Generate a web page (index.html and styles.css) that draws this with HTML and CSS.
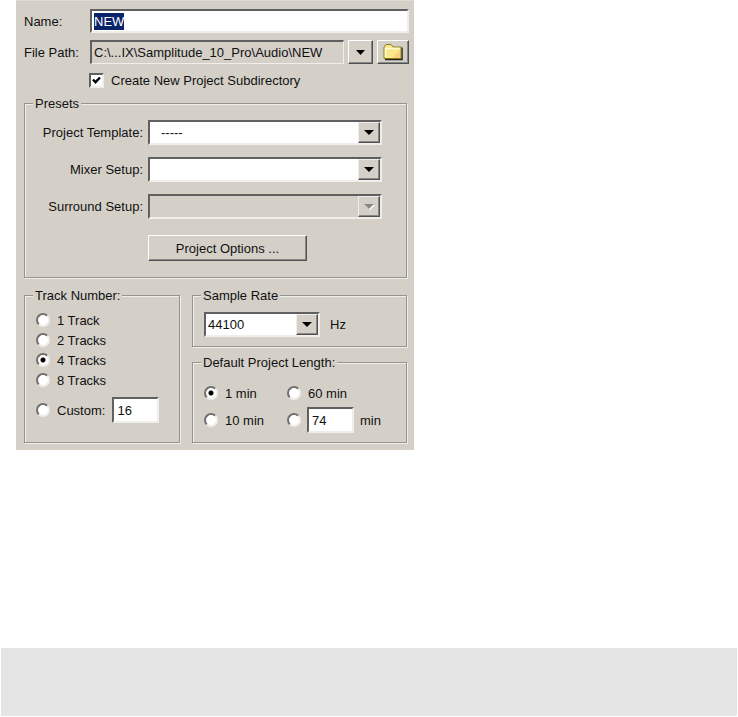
FILE: index.html
```html
<!DOCTYPE html>
<html lang="en">
<head>
    <meta charset="UTF-8">
    <meta name="viewport" content="width=device-width, initial-scale=1.0">
    <title>New Project</title>
    <link rel="stylesheet" href="styles.css">
</head>
<body>

<form class="dialog">
    <div class="row">
        <label class="row-label" for="name">Name:</label>
        <div class="name-box">
            <input type="text" id="name" class="name-input" value="NEW">
        </div>
    </div>
    <div class="row">
        <label class="row-label" for="path">File Path:</label>
        <input type="text" id="path" class="field path" value="C:\...IX\Samplitude_10_Pro\Audio\NEW" readonly>
        <button type="button" class="btn btn-arrow" aria-label="Recent paths">
            <svg width="9" height="5" viewBox="0 0 9 5"><path d="M0 0h9L4.500 5z" fill="#000"/></svg>
        </button>
        <button type="button" class="btn btn-folder" aria-label="Browse">
            <svg width="20" height="18" viewBox="0 0 20 18">
                <path d="M2 16.500h17V4.500" fill="none" stroke="#222" stroke-width="1.500"/>
                <path d="M1 15.500V4l2-2.500h5L10 4h8v11.500z" fill="#fbe88a" stroke="#8a7a1c"/>
                <path d="M2.500 14V5.500h14" fill="none" stroke="#fffbd0" stroke-width="1.500"/>
                <path d="M9 15l8-8v8z" fill="#f8d27c"/>
            </svg>
        </button>
    </div>
    <label class="check-row">
        <input type="checkbox" class="check" checked>
        <svg class="tick" width="9" height="9" viewBox="0 0 9 9"><path d="M1 3.500l2.500 2.700L8 1.500" fill="none" stroke="#000" stroke-width="2.400"/></svg>
        Create New Project Subdirectory
    </label>

    <fieldset class="group presets">
        <legend>Presets</legend>
        <div class="preset-row">
            <label for="template">Project Template:</label>
            <div class="combo">
                <select id="template" class="field template"><option>-----</option></select>
            </div>
        </div>
        <div class="preset-row">
            <label for="mixer">Mixer Setup:</label>
            <div class="combo">
                <select id="mixer" class="field"><option></option></select>
            </div>
        </div>
        <div class="preset-row">
            <label for="surround">Surround Setup:</label>
            <div class="combo combo-off">
                <select id="surround" class="field" disabled><option></option></select>
            </div>
        </div>
        <button type="button" class="btn btn-options">Project Options ...</button>
    </fieldset>

    <div class="columns">
        <fieldset class="group tracks">
            <legend>Track Number:</legend>
            <label class="option"><input type="radio" class="radio" name="tracks"> 1 Track</label>
            <label class="option"><input type="radio" class="radio" name="tracks"> 2 Tracks</label>
            <label class="option"><input type="radio" class="radio" name="tracks" checked> 4 Tracks</label>
            <label class="option"><input type="radio" class="radio" name="tracks"> 8 Tracks</label>
            <div class="custom">
                <label class="option"><input type="radio" class="radio" name="tracks"> Custom:</label>
                <input type="text" class="field number" value="16" aria-label="Custom track number">
            </div>
        </fieldset>

        <div class="side">
            <fieldset class="group rate">
                <legend>Sample Rate</legend>
                <div class="combo">
                    <select id="rate" class="field"><option>44100</option></select>
                </div>
                <label for="rate">Hz</label>
            </fieldset>

            <fieldset class="group length">
                <legend>Default Project Length:</legend>
                <div class="length-grid">
                    <label class="option"><input type="radio" class="radio" name="length" checked> 1 min</label>
                    <label class="option"><input type="radio" class="radio" name="length"> 60 min</label>
                    <label class="option"><input type="radio" class="radio" name="length"> 10 min</label>
                    <div class="other">
                        <input type="radio" class="radio" name="length" aria-label="Other length">
                        <input type="text" id="minutes" class="field number" value="74">
                        <label for="minutes">min</label>
                    </div>
                </div>
            </fieldset>
        </div>
    </div>
</form>

<footer class="band"></footer>

<script>
// Name is preselected so it can be typed over
const nameInput = document.getElementById('name');
nameInput.focus();
nameInput.select();
</script>

</body>
</html>
```
FILE: styles.css
```css
* {
    box-sizing: border-box;
}

body {
    margin: 0;
    min-height: 100vh;
    display: flex;
    flex-direction: column;
    background-color: #fff;
    color: #111;
    font-family: "Liberation Sans", Arial, sans-serif;
    font-size: 13px;
    line-height: 17px;
}

input, select, button {
    margin: 0;
    font: inherit;
    color: inherit;
    outline: none;
}

.dialog {
    width: 100%;
    max-width: 398px;
    margin-left: 16px;
    padding: 8px 5px 7px 8px;
    background-color: #d4d0c8;
    border-top: 1px solid #dedbd5;
}

.row {
    display: flex;
    align-items: center;
    height: 24px;
    margin-bottom: 7px;
}

.row-label {
    width: 66px;
}

/* sunken boxes */
.field, .name-box {
    min-width: 0;
    height: 24px;
    padding: 0 3px;
    background-color: #fff;
    border: 2px solid;
    border-color: #606060 #f0eeea #f0eeea #606060;
    border-radius: 0;
}

.name-box {
    flex: 1;
    display: flex;
    align-items: center;
    padding: 0 2px;
}

.name-input {
    width: 100%;
    height: 17px;
    padding: 0;
    border: none;
    background: none;
}

.name-input::selection {
    background-color: #0a246a;
    color: #fff;
}

.path {
    flex: 1;
    padding: 0 2px;
    background-color: #d4d0c8;
    border-width: 2px 1px 1px 2px;
}

/* raised buttons */
.btn {
    display: flex;
    align-items: center;
    justify-content: center;
    padding: 0;
    background-color: #d4d0c8;
    border: 1px solid;
    border-color: #fff #505050 #505050 #fff;
    box-shadow: inset -1px -1px 0 #888;
}

.btn-arrow {
    width: 25px;
    height: 24px;
    margin: 0 4px;
}

.btn-folder {
    width: 32px;
    height: 24px;
}

.btn-options {
    width: 159px;
    height: 26px;
    margin: 16px 0 0 112px;
}

.check-row {
    display: flex;
    align-items: center;
    height: 18px;
    margin-bottom: 6px;
    padding-left: 65px;
}

.check {
    appearance: none;
    width: 15px;
    height: 15px;
    background-color: #fff;
    border: 2px solid;
    border-color: #606060 #f0eeea #f0eeea #606060;
}

.tick {
    margin: 0 10px 0 -12px;
    pointer-events: none;
}

.check:not(:checked) + .tick {
    visibility: hidden;
}

.group {
    min-width: 0;
    margin: 0;
    border: 1px solid #969490;
    box-shadow: 1px 1px 0 #f0eeea, inset 1px 1px 0 #f0eeea;
}

.group legend {
    margin-left: -3px;
    padding: 0 2px;
    background-color: #d4d0c8;
}

.presets {
    margin-right: 2px;
    padding: 8px 24px 16px 11px;
}

.preset-row {
    display: grid;
    grid-template-columns: 107px 1fr;
    column-gap: 5px;
    align-items: center;
    text-align: right;
}

.preset-row + .preset-row {
    margin-top: 12px;
}

.combo {
    position: relative;
}

.combo .field {
    display: block;
    appearance: none;
    width: 100%;
    height: 25px;
    padding: 0 20px 0 2px;
    opacity: 1;
}

.combo .template {
    padding-left: 11px;
}

.combo-off .field {
    background-color: #d4d0c8;
}

/* drop-down button drawn over the right end of the select */
.combo::before {
    content: "";
    position: absolute;
    z-index: 1;
    top: 2px;
    right: 2px;
    bottom: 2px;
    width: 20px;
    background-color: #d4d0c8;
    border: 1px solid;
    border-color: #f0eeea #505050 #505050 #f0eeea;
    box-shadow: inset -1px -1px 0 #888;
    pointer-events: none;
}

.combo::after {
    content: "";
    position: absolute;
    z-index: 2;
    top: 10px;
    right: 8px;
    border: solid transparent;
    border-width: 5px 5px 0;
    border-top-color: #000;
    pointer-events: none;
}

.combo-off::after {
    border-top-color: #888;
    filter: drop-shadow(1px 1px 0 #fff);
}

.columns {
    display: grid;
    grid-template-columns: 156px 1fr;
    gap: 12px;
    margin: 9px 2px 0 0;
}

.tracks {
    padding: 6px 8px 10px 11px;
}

.option {
    display: flex;
    align-items: center;
    gap: 7px;
    height: 20px;
    white-space: nowrap;
}

.radio {
    appearance: none;
    flex: none;
    width: 14px;
    height: 14px;
    border: 2px solid;
    border-color: #707070 #f0eeea #f0eeea #707070;
    border-radius: 50%;
    background-color: #fff;
}

.radio:checked {
    background-image: radial-gradient(circle, #000 2px, transparent 3px);
}

.custom {
    display: flex;
    align-items: center;
    gap: 7px;
    margin-top: 7px;
}

.number {
    width: 47px;
    height: 26px;
}

.side {
    display: flex;
    flex-direction: column;
    gap: 7px;
}

.rate {
    display: flex;
    align-items: center;
    gap: 10px;
    padding: 8px 11px 9px;
}

.rate .combo {
    width: 116px;
}

.length {
    padding: 12px 11px 9px;
}

.length-grid {
    display: grid;
    grid-template-columns: 83px 1fr;
    row-gap: 4px;
    align-items: center;
}

.other {
    display: flex;
    align-items: center;
    gap: 6px;
}

.band {
    height: 68px;
    margin: auto 1px 1px;
    background-color: #e5e5e5;
}
```
